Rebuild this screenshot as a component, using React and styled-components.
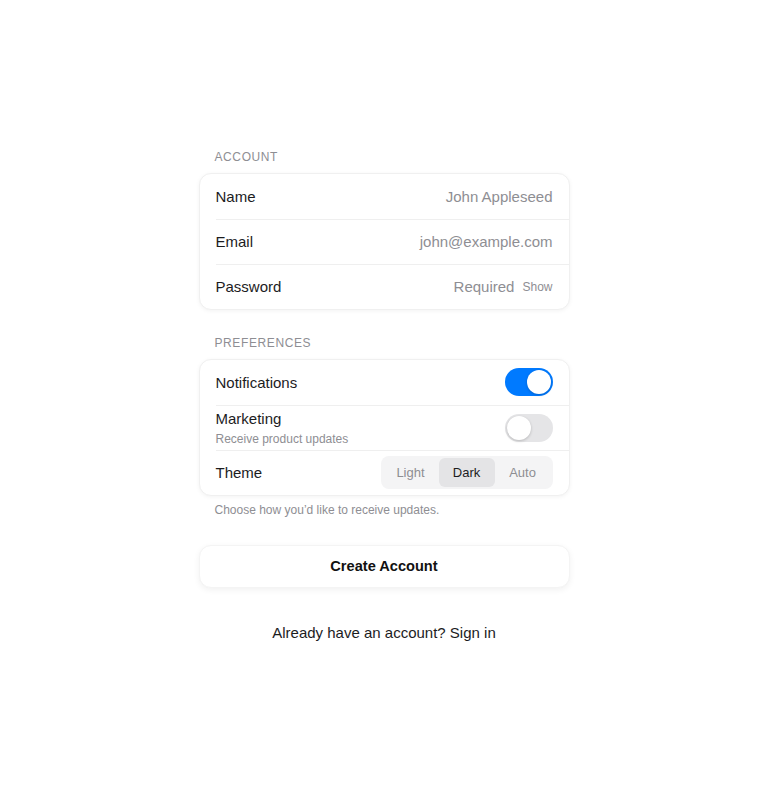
import { useState } from 'react';
import styled, { createGlobalStyle } from 'styled-components';

const GlobalStyle = createGlobalStyle`
  html, body {
    margin: 0;
    padding: 0;
    background: #ffffff;
  }
  body {
    font-family: "Liberation Sans", Arial, sans-serif;
    color: #1c1c1e;
  }
`;

const Page = styled.div`
  min-height: 100vh;
  box-sizing: border-box;
  padding-bottom: 10px;
  display: flex;
  justify-content: center;
  align-items: center;
`;

const Form = styled.div`
  width: 371px;
  display: flex;
  flex-direction: column;
`;

const SectionLabel = styled.div`
  font-size: 12px;
  letter-spacing: 0.6px;
  color: #8e8e93;
  text-transform: uppercase;
  padding: 0 16px;
  margin-bottom: 9px;
  margin-top: ${(p) => (p.$first ? '0' : '26px')};
`;

const Card = styled.div`
  background: #fff;
  border: 1px solid #f0f0f0;
  border-radius: 12px;
  box-shadow: 0 1px 4px rgba(0, 0, 0, 0.05);
  overflow: hidden;
`;

const Row = styled.div`
  display: flex;
  align-items: center;
  justify-content: space-between;
  min-height: 45px;
  margin-left: 16px;
  padding-right: 16px;
  box-sizing: border-box;
  & + & {
    border-top: 1px solid #efefef;
  }
`;

const Label = styled.div`
  font-size: 15px;
  color: #1c1c1e;
`;

const LabelStack = styled.div`
  display: flex;
  flex-direction: column;
  gap: 5px;
`;

const SubText = styled.div`
  font-size: 12px;
  color: #8e8e93;
`;

const Value = styled.div`
  font-size: 15px;
  color: #8e8e93;
  display: flex;
  align-items: center;
  gap: 8px;
`;

const SmallLink = styled.span`
  font-size: 12px;
  color: #8e8e93;
`;

const Toggle = styled.button`
  width: 48px;
  height: 28px;
  border-radius: 14px;
  border: none;
  padding: 2px;
  background: ${(p) => (p.$on ? '#007aff' : '#e5e5e7')};
  display: flex;
  justify-content: ${(p) => (p.$on ? 'flex-end' : 'flex-start')};
  cursor: pointer;
  box-sizing: border-box;
`;

const Knob = styled.span`
  width: 24px;
  height: 24px;
  border-radius: 50%;
  background: #fff;
  box-shadow: 0 1px 3px rgba(0, 0, 0, 0.2);
`;

const Segmented = styled.div`
  display: flex;
  background: #f4f4f5;
  border-radius: 8px;
  padding: 2px;
  margin: 4px 0;
`;

const Segment = styled.button`
  width: 56px;
  height: 29px;
  border: none;
  border-radius: 6px;
  font-family: inherit;
  font-size: 13px;
  color: ${(p) => (p.$active ? '#1c1c1e' : '#8e8e93')};
  background: ${(p) => (p.$active ? '#e4e4e6' : 'transparent')};
  cursor: pointer;
`;

const Footnote = styled.div`
  font-size: 12px;
  color: #8e8e93;
  padding: 0 16px;
  margin-top: 7px;
`;

const PrimaryButton = styled.button`
  margin-top: 28px;
  height: 43px;
  border: 1px solid #f4f4f4;
  border-radius: 12px;
  background: #fff;
  box-shadow: 0 2px 6px rgba(0, 0, 0, 0.06);
  font-family: inherit;
  font-size: 14.6px;
  font-weight: 700;
  color: #111;
  cursor: pointer;
`;

const SignIn = styled.div`
  margin-top: 36px;
  text-align: center;
  font-size: 15px;
  color: #1c1c1e;
`;

export default function App() {
  const [notif, setNotif] = useState(true);
  const [marketing, setMarketing] = useState(false);
  const [theme, setTheme] = useState('Dark');

  return (
    <>
      <GlobalStyle />
      <Page>
        <Form>
          <SectionLabel $first>Account</SectionLabel>
          <Card>
            <Row>
              <Label>Name</Label>
              <Value>John Appleseed</Value>
            </Row>
            <Row>
              <Label>Email</Label>
              <Value>john@example.com</Value>
            </Row>
            <Row>
              <Label>Password</Label>
              <Value>
                Required <SmallLink>Show</SmallLink>
              </Value>
            </Row>
          </Card>

          <SectionLabel>Preferences</SectionLabel>
          <Card>
            <Row>
              <Label>Notifications</Label>
              <Toggle $on={notif} onClick={() => setNotif(!notif)}>
                <Knob />
              </Toggle>
            </Row>
            <Row>
              <LabelStack>
                <Label>Marketing</Label>
                <SubText>Receive product updates</SubText>
              </LabelStack>
              <Toggle $on={marketing} onClick={() => setMarketing(!marketing)}>
                <Knob />
              </Toggle>
            </Row>
            <Row>
              <Label>Theme</Label>
              <Segmented>
                {['Light', 'Dark', 'Auto'].map((t) => (
                  <Segment key={t} $active={theme === t} onClick={() => setTheme(t)}>
                    {t}
                  </Segment>
                ))}
              </Segmented>
            </Row>
          </Card>
          <Footnote>Choose how you’d like to receive updates.</Footnote>

          <PrimaryButton>Create Account</PrimaryButton>
          <SignIn>Already have an account? Sign in</SignIn>
        </Form>
      </Page>
    </>
  );
}
